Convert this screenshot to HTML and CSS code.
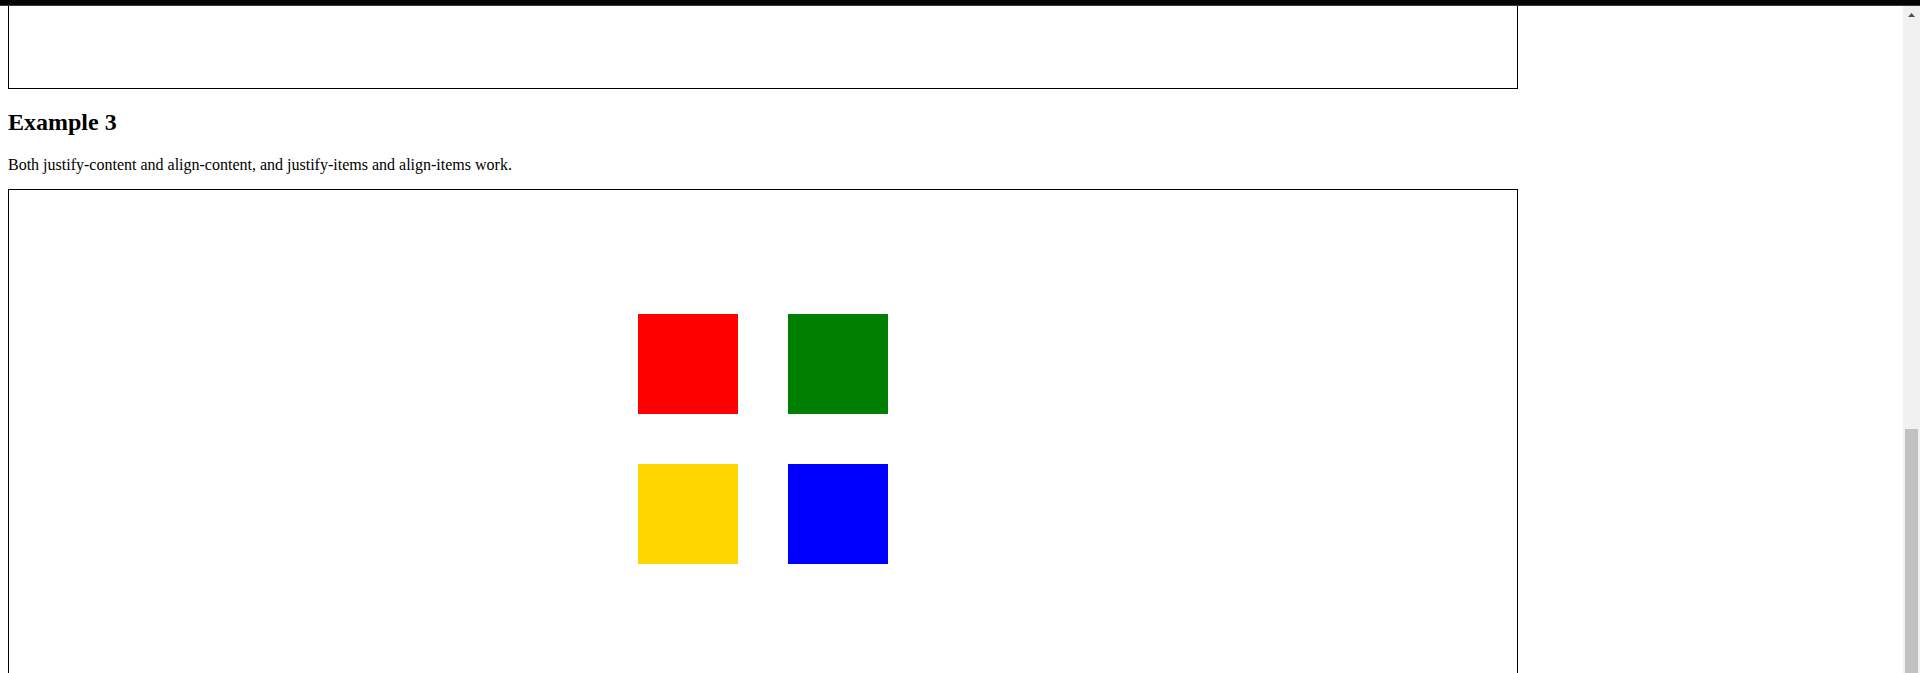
FILE: index.html
```html
<!DOCTYPE html>
<html lang="en">
<head>
<meta charset="utf-8">
<title>Grid alignment examples</title>
<link rel="stylesheet" href="styles.css">
</head>
<body>
<div class="topbar"></div>
<div class="frame">
  <main class="page">
    <div class="box box-cut"></div>
    <h2 class="title">Example 3</h2>
    <p class="desc">Both justify-content and align-content, and justify-items and align-items work.</p>
    <div class="box grid-box">
      <div class="cell red"></div>
      <div class="cell green"></div>
      <div class="cell gold"></div>
      <div class="cell blue"></div>
    </div>
  </main>
  <div class="scrollbar">
    <div class="sb-button">
      <svg width="7" height="4" viewBox="0 0 7 4"><polygon points="0,4 3.5,0 7,4" fill="#505050"/></svg>
    </div>
    <div class="sb-track">
      <div class="sb-thumb"></div>
    </div>
  </div>
</div>
</body>
</html>
```
FILE: styles.css
```css
html, body {
  margin: 0;
  padding: 0;
}
body {
  height: 673px;
  overflow: hidden;
  background: #fff;
  color: #000;
  font-family: "Liberation Serif", "Times New Roman", serif;
  font-size: 16px;
  display: flex;
  flex-direction: column;
}
.topbar {
  height: 5px;
  background: #050505;
  border-bottom: 1px solid #3a3a3a;
  flex: none;
}
.frame {
  flex: 1;
  display: flex;
  overflow: hidden;
}
.page {
  flex: 1;
  padding: 0 8px;
  overflow: hidden;
}
.box {
  box-sizing: border-box;
  width: 80%;
  border: 1px solid #000;
}
.box-cut {
  border-top: none;
  height: 83px;
}
.title {
  font-size: 24px;
  font-weight: bold;
  margin: 20px 0 19.92px;
}
.desc {
  margin: 16px 0 15px;
}
.grid-box {
  height: 500px;
  display: grid;
  grid-template-columns: repeat(2, 100px);
  grid-template-rows: repeat(2, 100px);
  gap: 50px;
  place-content: center;
  place-items: center;
}
.cell {
  width: 100px;
  height: 100px;
}
.red { background: #ff0000; }
.green { background: #008000; }
.gold { background: #ffd700; }
.blue { background: #0000ff; }
.scrollbar {
  width: 17px;
  flex: none;
  background: #f1f1f1;
  display: flex;
  flex-direction: column;
}
.sb-button {
  height: 17px;
  display: flex;
  align-items: center;
  justify-content: center;
  flex: none;
}
.sb-track {
  flex: 1;
  padding-top: 406px;
  display: flex;
  flex-direction: column;
}
.sb-thumb {
  flex: 1;
  margin: 0 2px;
  background: #c1c1c1;
}
```
